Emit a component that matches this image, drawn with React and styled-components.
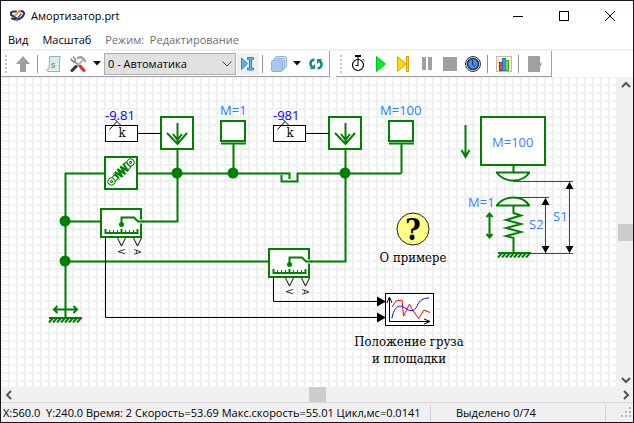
import React from 'react'
import styled, { createGlobalStyle } from 'styled-components'

const GREEN = '#008000'

function UpIcon() {
    return (
        <svg width="14" height="16"><path d="M7 0 L14 8 H10 V16 H4 V8 H0 Z" fill="#a0a0a0" /></svg>
    )
}

function ScriptIcon() {
    return (
        <svg width="16" height="16">
            <path d="M3.5 .5 H14.5 L13.5 3 V15.5 H1.5 C.5 15 .5 13 1.5 13 H3 Z" fill="#d9ecec" stroke="#93b5b5" />
            <path d="M2 14.5 H12" stroke="#f4fbfb" />
            <text x="5" y="12" fontSize="9" fontWeight="bold" fontFamily="Open Sans, sans-serif" fill="#86b23c">s</text>
        </svg>
    )
}

function ToolsIcon() {
    return (
        <svg width="16" height="16" fill="none" strokeLinecap="round">
            <path d="M5 6 L10 10" stroke="#9a9a9a" strokeWidth="2" />
            <path d="M10 10 L14 14.5" stroke="#dd2a2a" strokeWidth="3" />
            <path d="M12 5 L6 11" stroke="#b8b8b8" strokeWidth="2" />
            <path d="M6 10.5 L2 14.5" stroke="#333" strokeWidth="3" />
            <path d="M1 3 L3 5 M3.5 1 C6 3 6 5 3.5 6 L1 3.5" stroke="#888" strokeWidth="1.5" />
            <path d="M8 2 C11 0 13 2 15 5" stroke="#a4a4a4" strokeWidth="2.5" />
        </svg>
    )
}

function CaretIcon() {
    return <svg width="8" height="5"><path d="M0 0 H8 L4 4.5 Z" fill="#111" /></svg>
}

function CursorIcon() {
    return (
        <svg width="14" height="14">
            <path d="M.5 1 L6.5 6.5 L.5 12.5 Z" fill="#5fb3ea" stroke="#2a86cc" />
            <path d="M6.5 .5 H12.5 V2.5 H10.5 V11 H12.5 V13 H6.5 V11 H8.5 V2.5 H6.5 Z" fill="#6bb8ee" stroke="#2a86cc" />
        </svg>
    )
}

function LayersIcon() {
    return (
        <svg width="16" height="16" stroke="#8fb3dd">
            <rect x="4.5" y=".5" width="11" height="11" rx="1.5" fill="#d4e4f5" />
            <rect x="2.5" y="2.5" width="11" height="11" rx="1.5" fill="#c3d9f1" />
            <rect x=".5" y="4.5" width="11" height="11" rx="1.5" fill="#a9c9eb" />
        </svg>
    )
}

function RefreshIcon() {
    return (
        <svg width="14" height="12" fill="none" stroke="#0b8a88" strokeWidth="2.5">
            <path d="M5.5 1.5 C1 2 .5 6.5 3 9" />
            <path d="M1.5 10.5 H5.5 V7 Z" fill="#0b8a88" strokeWidth="1" />
            <path d="M8.5 10.5 C13 10 13.5 5.5 11 3" />
            <path d="M12.5 1.5 H8.5 V5 Z" fill="#0b8a88" strokeWidth="1" />
        </svg>
    )
}

function StopwatchIcon() {
    return (
        <svg width="14" height="17" fill="none" stroke="#000">
            <circle cx="7" cy="10" r="5.5" strokeWidth="1.2" />
            <path d="M4 1 H10" strokeWidth="2" />
            <path d="M7 1 V11 M4.5 10.5 H7 M11.5 4 L13 5.5" />
        </svg>
    )
}

function PlayIcon() {
    return <svg width="10" height="16"><path d="M.5 .5 L9.5 8 L.5 15.5 Z" fill="#00f020" stroke="#0ac020" /></svg>
}

function SkipIcon() {
    return (
        <svg width="13" height="16" fill="#ffd800" stroke="#dca000">
            <path d="M.5 .5 L9 8 L.5 15.5 Z" />
            <rect x="9.5" y=".5" width="2" height="15" />
        </svg>
    )
}

function PauseIcon() {
    return <svg width="10" height="13" fill="#a0a0a0"><rect width="4" height="13" /><rect x="6" width="4" height="13" /></svg>
}

function StopIcon() {
    return <svg width="14" height="14"><rect width="14" height="14" fill="#a0a0a0" /></svg>
}

function ClockIcon() {
    return (
        <svg width="16" height="16">
            <circle cx="8" cy="8" r="7.5" fill="#e4e8f0" stroke="#2b3148" />
            <circle cx="8" cy="8" r="5.5" fill="#3c92f4" stroke="#2b3148" strokeWidth="1.5" />
            <path d="M7.5 4 V8.5 L10 10.5" fill="none" stroke="#12305e" />
        </svg>
    )
}

function ChartIcon() {
    return (
        <svg width="16" height="16">
            <rect x=".5" y=".5" width="15" height="15" fill="#fbf4ea" stroke="#c9b99f" />
            <path d="M1 4 H15 M1 7 H15 M1 10 H15" stroke="#e4d8c6" />
            <rect x="3.5" y="6.5" width="3" height="8" fill="#f0453c" stroke="#c0201c" />
            <rect x="6.5" y="2.5" width="3" height="12" fill="#2f9cf0" stroke="#1878b8" />
            <rect x="9.5" y="4.5" width="3" height="10" fill="#8cd43c" stroke="#4f9c1c" />
        </svg>
    )
}

function ExportIcon() {
    return <svg width="14" height="16"><path d="M0 0 H12 V6 L14 8 L12 11 V16 H0 Z" fill="#a0a0a0" /></svg>
}

function LogoIcon() {
    return (
        <svg width="15" height="13" fill="none" strokeWidth="2" strokeLinecap="round">
            <path d="M6 2.5 H4 C0 2.5 0 6.5 3 7 L6 9 C6 10.5 4 10.5 2 9.5" stroke="#2e2e66" />
            <path d="M9 2.5 C13 1 15 4 13.5 6 C12 9 10 10 7 10.5" stroke="#2e2e66" />
            <path d="M10 1.5 L5 6.5" stroke="#f0a030" />
            <path d="M11 5 L6 11.5" stroke="#5a5a90" strokeWidth="1.5" />
        </svg>
    )
}

function Chevron({ d }) {
    return <svg width="10" height="10"><path d={d} fill="none" stroke="#555" strokeWidth="2" /></svg>
}

// value block with the "k" gain and its pen mark
function Gain({ x, value }) {
    return (
        <g transform={`translate(${x} 125)`}>
            <rect x=".5" y=".5" width="32" height="16" fill="#fff" stroke="#000" />
            <path d="M33 8.5 H56" stroke="#000" />
            <Value x="0" y="-5">{value}</Value>
            <Caption x="17" y="12">k</Caption>
            <path d="M4.5 4.5 L12 -3.5 M9.5 -6 L15.5 0" stroke="#000" fill="none" />
        </g>
    )
}

function Force({ x }) {
    return (
        <g transform={`translate(${x} 116)`} fill="none" stroke={GREEN} strokeWidth="2">
            <rect x="1" y="1" width="32" height="32" fill="#fff" />
            <path d="M17.5 7 V28 M13 18 L17.5 24 L22 18 M7 17 L17.5 28 L27 17" />
        </g>
    )
}

function Mass({ x, textX, label }) {
    return (
        <g fill="none" stroke={GREEN} strokeWidth="2">
            <rect x={x + 1} y="121" width="24" height="20" fill="#fff" />
            <path d={`M${x + 1} 143.5 h25 M${x + 13.5} 143 V173`} />
            <Mark x={textX} y="115" stroke="none" $top>{label}</Mark>
        </g>
    )
}

function Sensor({ x, y }) {
    return (
        <g transform={`translate(${x} ${y})`}>
            <g fill="none" stroke={GREEN} strokeWidth="2">
                <rect x="1" y="1" width="40" height="28" fill="#fff" />
                <path d="M40 13.5 h3" stroke="#fff" strokeWidth="4" />
                <path d="M44 13.5 H38 L34 9.5 H21.5 V16" />
                <circle cx="21.5" cy="16.5" r="1.5" fill={GREEN} />
                <path d="M5.5 21 V25 H37.5 V21 M21.5 21 V25" />
                <path d="M9.5 22 V25 M13.5 22 V25 M17.5 22 V25 M25.5 22 V25 M29.5 22 V25 M33.5 22 V25" strokeWidth="1" />
            </g>
            <path d="M17.5 30 L21.5 38 L25.5 30 M33.5 30 L37.5 38 L41.5 30" fill="none" stroke="#000" />
            <Port transform="translate(18 41) rotate(90)">V</Port>
            <Port transform="translate(34 41) rotate(90)">A</Port>
        </g>
    )
}

function Ground({ x, y }) {
    const hatch = [2, 6, 10, 14, 18, 22, 26, 30].map(i => `M${i + 2} 0 l-4 4.5`).join(' ')
    return (
        <g transform={`translate(${x} ${y})`} fill="none" stroke={GREEN}>
            <path d="M0 0 H33" strokeWidth="2" />
            <path d={hatch} strokeWidth="2" />
        </g>
    )
}

function Damper() {
    return (
        <g fill="none" stroke={GREEN}>
            <rect x="105" y="157" width="32" height="32" fill="#fff" strokeWidth="2" />
            <g transform="translate(111.5 181.5) rotate(-45)">
                <circle r="3.5" />
                <circle r="1" />
                <circle cx="27" r="3.5" />
                <circle cx="27" r="1" />
                <path d="M3 -2.5 H8 V2.5 H3 M7 -4.5 V4.5 M20 -3.5 H24 V3.5 H20" />
                <path d="M9 -4.5 L11 4.5 L13 -4.5 L15 4.5 L17 -4.5 L19 4.5 L21 -4.5" strokeWidth="2" />
            </g>
        </g>
    )
}

function Plot() {
    return (
        <g fill="none">
            <rect x="385.5" y="293.5" width="48" height="32" fill="#fff" stroke="#000" />
            <path d="M389.5 321 V298 M387 303 L389.5 297 L392 303 M389 321.5 H430 M424 319 L430 321.5 L424 324" stroke="#000" />
            <path d="M392 307 L396 301 L402 300 L403.5 316 L409.5 304 L412 309 L418.5 318.5 L424 310 L430 312.5" stroke="#f00" />
            <path d="M392 318 C394 306 400 304 405 308 C412 313 415 311 418 304 C421 299 425 298 429 298" stroke="#00f" />
        </g>
    )
}

function Legend() {
    return (
        <g fill="none" stroke={GREEN} strokeWidth="2">
            <path d="M465.5 125 V157 M461.5 150 L465.5 157 L469.5 150" />
            <rect x="481" y="117" width="64" height="48" fill="#fff" />
            <g stroke="#444" strokeWidth="1">
                <path d="M513 181.5 H573 M513 197.5 H549 M530 253.5 H573 M545.5 198 V253 M569.5 182 V253" />
                <path d="M545.5 198 l4 7 h-8 z M545.5 253 l4 -7 h-8 z M569.5 182 l4 7 h-8 z M569.5 253 l4 -7 h-8 z" fill="#000" stroke="none" />
            </g>
            <path d="M513.5 165 V172 M496 172.5 H530 M497 173 C505 183 522 183 529 173" fill="#fff" />
            <path d="M496 205.5 H530 M497 205 C505 195 522 195 529 205" fill="#fff" />
            <path d="M513.5 205 V213 L521 215.5 L506 220 L521 224 L506 228 L521 232 L506 236 L513.5 238 V253" />
            <path d="M489.5 214 V237 M486.5 217 L489.5 213.5 L492.5 217 M486.5 234 L489.5 237.5 L492.5 234" />
            <Ground x={498} y={253} />
            <g stroke="none">
                <Mark x="492" y="147">M=100</Mark>
                <Mark x="468" y="207">M=1</Mark>
                <Mark x="529" y="229">S2</Mark>
                <Mark x="553" y="221">S1</Mark>
            </g>
        </g>
    )
}

function Scheme() {
    return (
        <Drawing width="616" height="309" viewBox="1 77 616 309">
            <g fill="none" stroke={GREEN} strokeWidth="2">
                <path d="M65.5 318 V173.5 H289.5 V179 M281.5 175 V181.5 H297.5 V173.5 H401.5" />
                <path d="M177.5 149 V221.5 H142 M65 221.5 H101 M65 261.5 H269 M345.5 149 V261.5 H310" />
            </g>
            <path d="M105.5 238 V317.5 H378 M273.5 278 V301.5 H378" fill="none" stroke="#000" />
            <path d="M377 296.5 L386 301.5 L377 306.5 Z M377 312.5 L386 317.5 L377 322.5 Z" />
            <Force x={160} />
            <Force x={328} />
            <Gain x={105} value="-9.81" />
            <Gain x={273} value="-981" />
            <Mass x={220} textX={220} label="M=1" />
            <Mass x={388} textX={380} label="M=100" />
            <Damper />
            <Sensor x={100} y={208} />
            <Sensor x={268} y={248} />
            <g fill={GREEN}>
                <circle cx="177" cy="173" r="5.5" />
                <circle cx="233" cy="173" r="5.5" />
                <circle cx="345" cy="173" r="5.5" />
                <circle cx="65" cy="221" r="5.5" />
                <circle cx="65" cy="261" r="5.5" />
            </g>
            <path d="M54 309.5 H77 M57.5 306 L54 309.5 L57.5 313 M73.5 306 L77 309.5 L73.5 313" fill="none" stroke={GREEN} strokeWidth="2" />
            <Ground x={49} y={318} />
            <circle cx="413" cy="229" r="16" fill="#ffff85" stroke="#222" />
            <Question x="413" y="240">?</Question>
            <Caption x="413" y="262">О примере</Caption>
            <Plot />
            <Caption x="409" y="346">Положение груза</Caption>
            <Caption x="409" y="363">и площадки</Caption>
            <Legend />
        </Drawing>
    )
}

function App() {
    return (
        <Window>
            <GlobalStyle />
            <TitleBar>
                <LogoIcon />
                <Title>Амортизатор.prt</Title>
                <WinBtn aria-label="Свернуть"><svg width="10" height="10"><path d="M0 5.5 H10" stroke="#000" /></svg></WinBtn>
                <WinBtn aria-label="Развернуть"><svg width="10" height="10"><rect x=".5" y=".5" width="9" height="9" fill="none" stroke="#000" /></svg></WinBtn>
                <WinBtn aria-label="Закрыть"><svg width="10" height="10"><path d="M0 0 L10 10 M10 0 L0 10" stroke="#000" /></svg></WinBtn>
            </TitleBar>
            <Menu>
                <MenuItem>Вид</MenuItem>
                <MenuItem>Масштаб</MenuItem>
                <MenuItem disabled>Режим:&nbsp; Редактирование</MenuItem>
            </Menu>
            <Bars>
                <ToolBar>
                    <Grip />
                    <ToolBtn aria-label="Вверх" disabled><UpIcon /></ToolBtn>
                    <Sep />
                    <ToolBtn aria-label="Скрипт"><ScriptIcon /></ToolBtn>
                    <ToolBtn aria-label="Инструменты" $w={25}><ToolsIcon /></ToolBtn>
                    <ToolBtn aria-label="Ещё инструменты" $w={13}><CaretIcon /></ToolBtn>
                    <SelectBox>
                        <Select aria-label="Слой" defaultValue="0">
                            <option value="0">0 - Автоматика</option>
                        </Select>
                        <svg width="10" height="6"><path d="M.5 .5 L5 5 L9.5 .5" fill="none" stroke="#444" /></svg>
                    </SelectBox>
                    <ToolBtn aria-label="Курсор" $w={22} $on><CursorIcon /></ToolBtn>
                    <Sep />
                    <ToolBtn aria-label="Слои"><LayersIcon /></ToolBtn>
                    <ToolBtn aria-label="Список слоёв" $w={14}><CaretIcon /></ToolBtn>
                    <ToolBtn aria-label="Обновить" $w={24}><RefreshIcon /></ToolBtn>
                </ToolBar>
                <ToolBar>
                    <Grip />
                    <ToolBtn aria-label="Таймер"><StopwatchIcon /></ToolBtn>
                    <ToolBtn aria-label="Пуск"><PlayIcon /></ToolBtn>
                    <ToolBtn aria-label="Шаг"><SkipIcon /></ToolBtn>
                    <ToolBtn aria-label="Пауза" disabled><PauseIcon /></ToolBtn>
                    <ToolBtn aria-label="Стоп" disabled><StopIcon /></ToolBtn>
                    <ToolBtn aria-label="Время"><ClockIcon /></ToolBtn>
                    <Sep />
                    <ToolBtn aria-label="График"><ChartIcon /></ToolBtn>
                    <Sep />
                    <ToolBtn aria-label="Выход" disabled><ExportIcon /></ToolBtn>
                </ToolBar>
            </Bars>
            <Work>
                <Sheet><Scheme /></Sheet>
                <VScroll>
                    <ScrollBtn aria-label="Прокрутить вверх"><Chevron d="M1 7 L5 3 L9 7" /></ScrollBtn>
                    <Track><VThumb /></Track>
                    <ScrollBtn aria-label="Прокрутить вниз"><Chevron d="M1 3 L5 7 L9 3" /></ScrollBtn>
                </VScroll>
            </Work>
            <HScroll>
                <ScrollBtn aria-label="Прокрутить влево"><Chevron d="M7 1 L3 5 L7 9" /></ScrollBtn>
                <Track><HThumb /></Track>
                <ScrollBtn aria-label="Прокрутить вправо"><Chevron d="M3 1 L7 5 L3 9" /></ScrollBtn>
            </HScroll>
            <Status>
                <Info>X:560.0&nbsp; Y:240.0 Время: 2 Скорость=53.69 Макс.скорость=55.01 Цикл,мс=0.0141</Info>
                <Selected>Выделено 0/74</Selected>
                <svg width="11" height="11" fill="#b8b8b8">
                    <path d="M8 0 h2 v2 h-2 z M4 4 h2 v2 h-2 z M8 4 h2 v2 h-2 z M0 8 h2 v2 h-2 z M4 8 h2 v2 h-2 z M8 8 h2 v2 h-2 z" />
                </svg>
            </Status>
        </Window>
    )
}

export default App

const GlobalStyle = createGlobalStyle`
    * {
        box-sizing: border-box;
    }
    body {
        margin: 0;
        font-family: "Open Sans", sans-serif;
        font-size: 11px;
        line-height: 16px;
        color: #000;
    }
    button, select {
        font: inherit;
        color: inherit;
        border: none;
        padding: 0;
        margin: 0;
        background: none;
    }
    svg {
        display: block;
        flex: none;
    }
`

const Window = styled.div`
    display: flex;
    flex-direction: column;
    height: 100vh;
    border: 1px solid #14161f;
    background: #fff;
    overflow: hidden;
`

const TitleBar = styled.header`
    display: flex;
    align-items: center;
    flex: none;
    height: 29px;
    padding-left: 9px;
`

const Title = styled.h1`
    flex: 1;
    margin: 0;
    padding-left: 6px;
    font-size: 11px;
    font-weight: normal;
`

const WinBtn = styled.button`
    display: flex;
    align-items: center;
    justify-content: center;
    width: 46px;
    height: 29px;
`

const Menu = styled.nav`
    display: flex;
    align-items: center;
    flex: none;
    gap: 14px;
    height: 21px;
    padding-left: 7px;
    border-bottom: 2px solid #f0f0f0;
`

const MenuItem = styled.button`
    white-space: nowrap;
    &:disabled {
        color: #6d6d6d;
    }
`

const Bars = styled.div`
    display: flex;
    flex: none;
    gap: 6px;
    height: 26px;
`

const ToolBar = styled.div`
    display: flex;
    align-items: center;
    padding: 0 1px 0 4px;
    border-right: 1px solid #a0a0a0;
    border-bottom: 1px solid #a0a0a0;
    &:last-child {
        padding-right: 5px;
    }
`

const Grip = styled.div`
    width: 2px;
    height: 18px;
    margin-right: 4px;
    background: repeating-linear-gradient(#c4c4c4 0 2px, #fff 2px 4px);
`

const ToolBtn = styled.button`
    display: flex;
    align-items: center;
    justify-content: center;
    width: ${p => p.$w || 23}px;
    height: 22px;
    background: ${p => p.$on ? '#f0f0f0' : 'none'};
`

const Sep = styled.div`
    width: 1px;
    height: 18px;
    margin: 0 4px 0 3px;
    background: #909090;
`

const SelectBox = styled.div`
    display: grid;
    align-items: center;
    margin: 0 1px;
    svg, select {
        grid-area: 1 / 1;
    }
    svg {
        justify-self: end;
        margin-right: 4px;
        pointer-events: none;
    }
`

const Select = styled.select`
    appearance: none;
    width: 132px;
    height: 22px;
    padding: 0 16px 0 3px;
    border: 1px solid #adadad;
    background: #e1e1e1;
`

const Work = styled.main`
    display: flex;
    flex: 1;
    min-height: 0;
`

const Sheet = styled.div`
    flex: 1;
    overflow: hidden;
    background:
        linear-gradient(#f0f0f0 2px, transparent 2px) 7px 7px / 8px 8px,
        linear-gradient(90deg, #f0f0f0 2px, #fff 2px) 7px 7px / 8px 8px;
`

const Drawing = styled.svg`
    text {
        font-size: 13px;
    }
`

const Value = styled.text`
    font-family: "Open Sans", sans-serif;
    fill: #0000ff;
`

const Mark = styled.text`
    font-family: "Open Sans", sans-serif;
    fill: ${p => p.$top ? '#1e80ff' : '#4080ff'};
`

const Caption = styled.text`
    font-family: "DejaVu Serif Condensed", serif;
    text-anchor: middle;
`

const Question = styled(Caption)`
    && {
        font-size: 30px;
        font-weight: bold;
    }
`

const Port = styled.text`
    && {
        font-family: "Open Sans", sans-serif;
        font-size: 9px;
    }
`

const VScroll = styled.div`
    display: flex;
    flex-direction: column;
    width: 15px;
    background: #f0f0f0;
`

const HScroll = styled.div`
    display: flex;
    flex: none;
    height: 15px;
    background: #f0f0f0;
`

const ScrollBtn = styled.button`
    display: flex;
    align-items: center;
    justify-content: center;
    width: 15px;
    height: 15px;
`

const Track = styled.div`
    display: flex;
    align-items: center;
    justify-content: center;
    flex: 1;
`

const VThumb = styled.div`
    width: 100%;
    height: 17px;
    background: #cdcdcd;
`

const HThumb = styled.div`
    width: 17px;
    height: 100%;
    background: #cdcdcd;
`

const Status = styled.footer`
    display: flex;
    align-items: center;
    flex: none;
    height: 20px;
    padding-right: 1px;
    border-top: 1px solid #d7d7d7;
    background: #f0f0f0;
`

const Info = styled.div`
    flex: 1;
    min-width: 0;
    padding-left: 2px;
    overflow: hidden;
    white-space: nowrap;
    border-right: 1px solid #d0d0d0;
`

const Selected = styled.div`
    width: 175px;
    padding-left: 25px;
    margin-right: 15px;
    border-right: 1px solid #d0d0d0;
`
